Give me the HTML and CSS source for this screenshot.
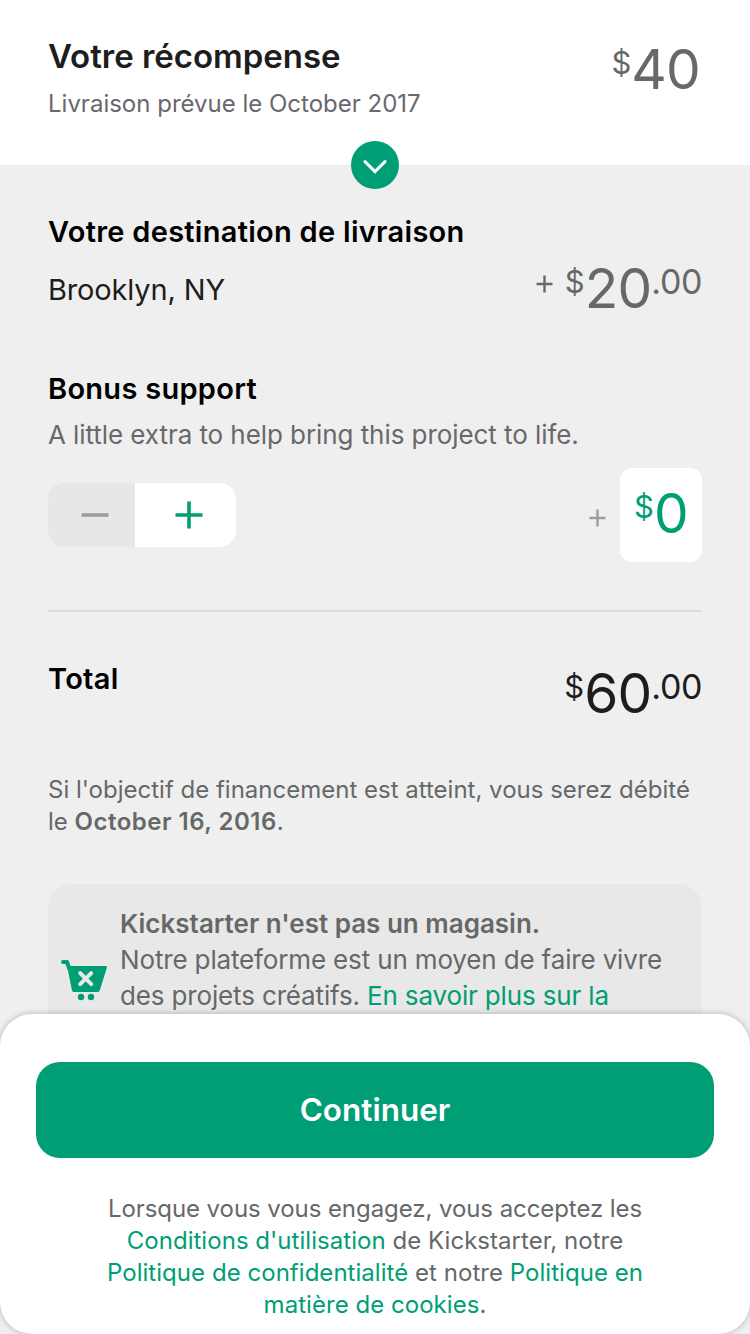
FILE: index.html
```html
<!DOCTYPE html>
<html lang="fr">
<head>
<meta charset="utf-8">
<title>Votre récompense</title>
<link rel="stylesheet" href="styles.css">
</head>
<body>
<main class="content">
  <header class="reward">
    <div>
      <h1 class="reward-title">Votre récompense</h1>
      <p class="reward-date">Livraison prévue le October 2017</p>
    </div>
    <div class="price price-muted"><span class="small currency">$</span><span class="big">40</span></div>
    <button class="expand" aria-label="Détails">
      <svg width="48" height="48" viewBox="0 0 48 48"><path d="M14 20.6 24 30.6 34 20.6" fill="none" stroke="#fff" stroke-width="3.1" stroke-linecap="round"/></svg>
    </button>
  </header>

  <section class="shipping">
    <h2 class="heading shipping-title">Votre destination de livraison</h2>
    <div class="shipping-row">
      <span class="place">Brooklyn, NY</span>
      <div class="price price-muted">
        <svg class="plus" width="17" height="18" viewBox="0 0 17 18"><path d="M.5 9h16M8.5 .5v17" stroke="#656969" stroke-width="2.4"/></svg>
        <span class="small currency">$</span><span class="big">20</span><span class="small cents">.00</span>
      </div>
    </div>
  </section>

  <section class="bonus">
    <h2 class="heading bonus-title">Bonus support</h2>
    <p class="bonus-text">A little extra to help bring this project to life.</p>
    <div class="bonus-row">
      <div class="stepper">
        <button class="step step-minus" aria-label="Moins"><svg width="28" height="28" viewBox="0 0 28 28"><path d="M.5 14h27" stroke="#9b9e9e" stroke-width="3.6"/></svg></button>
        <button class="step step-plus" aria-label="Plus"><svg width="28" height="28" viewBox="0 0 28 28"><path d="M.5 14h27M14 .5v27" stroke="#009e74" stroke-width="3.6"/></svg></button>
      </div>
      <div class="bonus-amount">
        <svg class="bonus-plus" width="17" height="18" viewBox="0 0 17 18"><path d="M.5 9h16M8.5 .5v17" stroke="#9b9e9e" stroke-width="2.4"/></svg>
        <div class="amount-box"><div class="price price-green"><span class="small currency">$</span><span class="big">0</span></div></div>
      </div>
    </div>
  </section>

  <section class="total">
    <h2 class="heading total-title">Total</h2>
    <div class="price price-dark"><span class="small currency">$</span><span class="big">60</span><span class="small cents">.00</span></div>
  </section>

  <p class="charge">Si l'objectif de financement est atteint, vous serez débité<br>le <b>October 16, 2016</b>.</p>

  <aside class="notice">
    <svg class="cart" width="48" height="42" viewBox="0 0 48 42">
      <path d="M3 3h4l2 6" fill="none" stroke="#009e74" stroke-width="4" stroke-linecap="round" stroke-linejoin="round"/>
      <path d="M7 7h38.6c1.2 0 1.6.7 1.2 1.7l-7 22.6c-.4 1.1-1 1.7-2.2 1.7H14.2c-1.3 0-2-.6-2.3-1.8L6.9 6z" fill="#009e74"/>
      <path d="m20.2 14.2 11 11m0-11-11 11" stroke="#e8e8e8" stroke-width="4" stroke-linecap="round"/>
      <circle cx="21" cy="38" r="3.2" fill="#009e74"/><circle cx="31" cy="38" r="3.2" fill="#009e74"/>
    </svg>
    <div class="notice-text">
      <p class="notice-title">Kickstarter n'est pas un magasin.</p>
      <p class="notice-line">Notre plateforme est un moyen de faire vivre</p>
      <p class="notice-line">des projets créatifs. <a class="link">En savoir plus sur la</a></p>
    </div>
  </aside>
</main>

<footer class="sheet">
  <button class="continue">Continuer</button>
  <p class="legal">
    <span class="legal-first">Lorsque vous vous engagez, vous acceptez les</span><br>
    <a class="link">Conditions d'utilisation</a> de Kickstarter, notre<br>
    <a class="link">Politique de confidentialité</a> et notre <a class="link">Politique en</a><br>
    <a class="link">matière de cookies</a>.
  </p>
</footer>
</body>
</html>
```

FILE: styles.css
```css
* { box-sizing: border-box; margin: 0; padding: 0; }
body {
  height: 1334px;
  overflow: hidden;
  background: #efefef;
  color: #1d1d1d;
  font-family: Inter, "Liberation Sans", sans-serif;
}
svg { display: block; flex: none; }
button { border: 0; font: inherit; }
p, h1, h2, span { white-space: nowrap; }

.content { height: 1014px; overflow: hidden; }

.reward {
  position: relative;
  display: flex;
  justify-content: space-between;
  height: 165px;
  padding: 36px 50px 0 48px;
  background: #fff;
}
.reward-title { font-size: 33px; line-height: 40px; font-weight: 600; letter-spacing: -0.02px; }
.reward-date { margin-top: 12px; font-size: 24px; line-height: 32px; color: #68686d; }
.reward .price { margin-top: 0; }
.expand {
  position: absolute;
  left: 351px;
  bottom: -24px;
  width: 48px;
  height: 48px;
  border-radius: 50%;
  background: #009e74;
}

.price { display: flex; align-items: flex-start; height: 66px; }
.price .big { font-size: 55px; line-height: 66px; letter-spacing: -0.8px; }
.price .small { font-size: 33px; line-height: 53px; }
.price .currency { font-size: 31px; }
.price .cents { font-size: 34px; letter-spacing: -0.4px; }
.price-muted { color: #656969; }
.price-green { color: #009e74; }
.price-dark { color: #1d1d1d; }

.heading { font-size: 29px; line-height: 36px; font-weight: 600; letter-spacing: 0.28px; color: #000; }
.shipping { padding: 49px 48px 0; }
.shipping-row { display: flex; justify-content: space-between; height: 66px; margin-top: 5px; }
.place { font-size: 29px; line-height: 36px; padding-top: 17px; letter-spacing: -0.15px; }
.shipping .plus { margin: 20px 12px 0 0; }

.bonus { margin: 50px 48px 0; padding-bottom: 48px; border-bottom: 2px solid #dcdcdc; }
.bonus-text { margin-top: 12px; font-size: 26px; line-height: 32px; letter-spacing: -0.07px; color: #68686d; }
.bonus-row { display: flex; justify-content: space-between; align-items: center; height: 94px; margin-top: 17px; }
.stepper { display: flex; width: 188px; height: 64px; border-radius: 16px; overflow: hidden; }
.step { display: flex; align-items: center; justify-content: center; }
.step-minus { width: 87px; background: #e7e7e7; padding-left: 6px; }
.step-plus { width: 101px; background: #fff; padding-left: 7px; }
.bonus-amount { display: flex; align-items: center; gap: 14px; }
.bonus-plus { margin-top: 5px; }
.amount-box { width: 82px; height: 94px; border-radius: 12px; background: #fff; padding: 12px 0 0 14px; }

.total { display: flex; justify-content: space-between; height: 108px; padding: 48px 48px 0; }
.total-title { padding-top: 1px; }
.charge { margin-top: 54px; padding-left: 48px; font-size: 24px; line-height: 32px; color: #656868; }
.charge b { font-weight: 600; letter-spacing: 0.5px; }

.notice {
  display: flex;
  height: 192px;
  margin: 46px 48px 0;
  border-radius: 24px;
  background: #e8e8e8;
}
.cart { margin: 75px 12px 0 12px; }
.notice-text { padding-top: 22px; font-size: 26px; line-height: 36px; color: #656868; }
.notice-title { font-weight: 600; }
.notice-line { letter-spacing: -0.15px; }
.link { color: #009e74; }

.sheet {
  height: 320px;
  padding: 48px 36px 0;
  border-radius: 32px;
  background: #fff;
  box-shadow: 0 0 6px rgba(0, 0, 0, .26);
}
.continue {
  display: block;
  width: 678px;
  height: 96px;
  padding-bottom: 1px;
  border-radius: 24px;
  background: #009e74;
  color: #fff;
  font-size: 31.5px;
  font-weight: 600;
}
.legal { margin-top: 35px; text-align: center; font-size: 24px; line-height: 32px; letter-spacing: 0.04px; color: #656868; }
.legal-first { letter-spacing: -0.07px; }
```
